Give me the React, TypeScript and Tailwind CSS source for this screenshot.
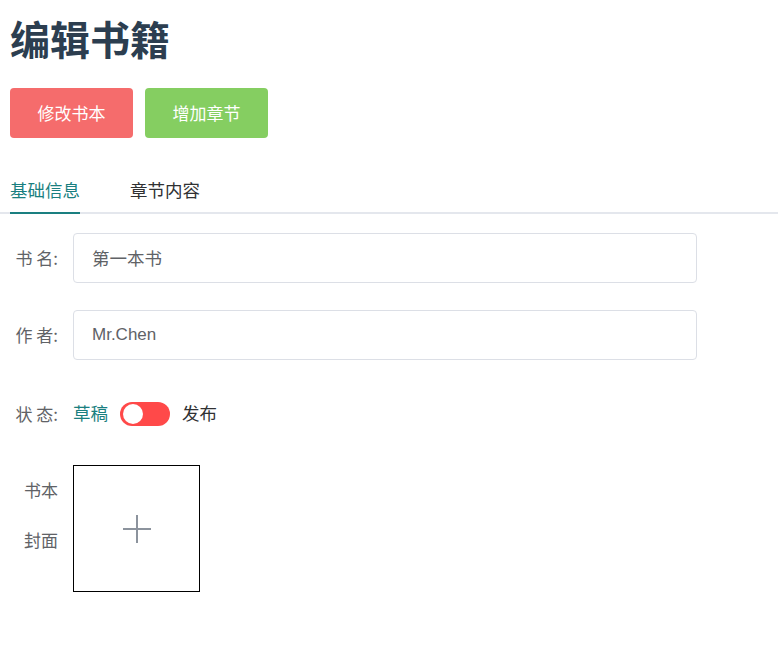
import React from "react";

const cjk = '"Noto Sans CJK SC", "Liberation Sans", sans-serif';

export default function App() {
  return (
    <div className="w-[778px] min-h-[650px] bg-white" style={{ fontFamily: cjk }}>
      <div className="pl-[10px]">
        <h1 className="pt-[18px] text-[40px] leading-[40px] font-bold text-[#2c3e50]">编辑书籍</h1>
        <div className="mt-[30px] flex gap-[12px]">
          <button className="w-[123px] h-[50px] rounded-[4px] bg-[#f56c6c] text-white text-[17px]">修改书本</button>
          <button className="w-[123px] h-[50px] rounded-[4px] bg-[#85ce61] text-white text-[17px]">增加章节</button>
        </div>
      </div>

      <div className="mt-[32px] pl-[10px] flex gap-[50px] border-b-2 border-[#e4e7ed]">
        <div className="relative h-[42px] pb-[2px] flex items-center text-[17.5px] text-[#1a7f80]">
          基础信息
          <span className="absolute left-0 right-0 bottom-[-2px] h-[2px] bg-[#1a7f80]" />
        </div>
        <div className="h-[42px] pb-[2px] flex items-center text-[17.5px] text-[#303133]">章节内容</div>
      </div>

      <div className="pl-[10px] pt-[19px]">
        <div className="flex items-center">
          <div className="w-[63px] pr-[15px] text-right text-[17px] text-[#606266]">书 名:</div>
          <div className="w-[624px] h-[50px] border border-[#dcdfe6] rounded-[4px] pl-[18px] flex items-center text-[17.5px] text-[#606266]">第一本书</div>
        </div>
        <div className="mt-[27px] flex items-center">
          <div className="w-[63px] pr-[15px] text-right text-[17px] text-[#606266]">作 者:</div>
          <div className="w-[624px] h-[50px] border border-[#dcdfe6] rounded-[4px] pl-[18px] flex items-center text-[17px] text-[#606266]" style={{ fontFamily: '"Liberation Sans", sans-serif' }}>Mr.Chen</div>
        </div>
        <div className="mt-[41px] h-[25px] flex items-center">
          <div className="w-[63px] pr-[15px] text-right text-[17px] text-[#606266]">状 态:</div>
          <span className="text-[17.5px] text-[#1a7f80]">草稿</span>
          <div className="ml-[12px] w-[50px] h-[24px] rounded-full bg-[#ff4949] relative">
            <span className="absolute left-[3px] top-[2px] w-[20px] h-[20px] rounded-full bg-white" />
          </div>
          <span className="ml-[12px] text-[17.5px] text-[#303133]">发布</span>
        </div>
        <div className="mt-[39px] flex items-start">
          <div className="w-[63px] pl-[13px] pr-[15px] text-right text-[17px] leading-[50px] text-[#606266]">书本封面</div>
          <div className="w-[127px] h-[127px] border border-black flex items-center justify-center">
            <svg width="30" height="30" viewBox="0 0 30 30">
              <path d="M15 1 V29 M1 15 H29" stroke="#8c939d" strokeWidth="2" fill="none" />
            </svg>
          </div>
        </div>
      </div>
    </div>
  );
}
